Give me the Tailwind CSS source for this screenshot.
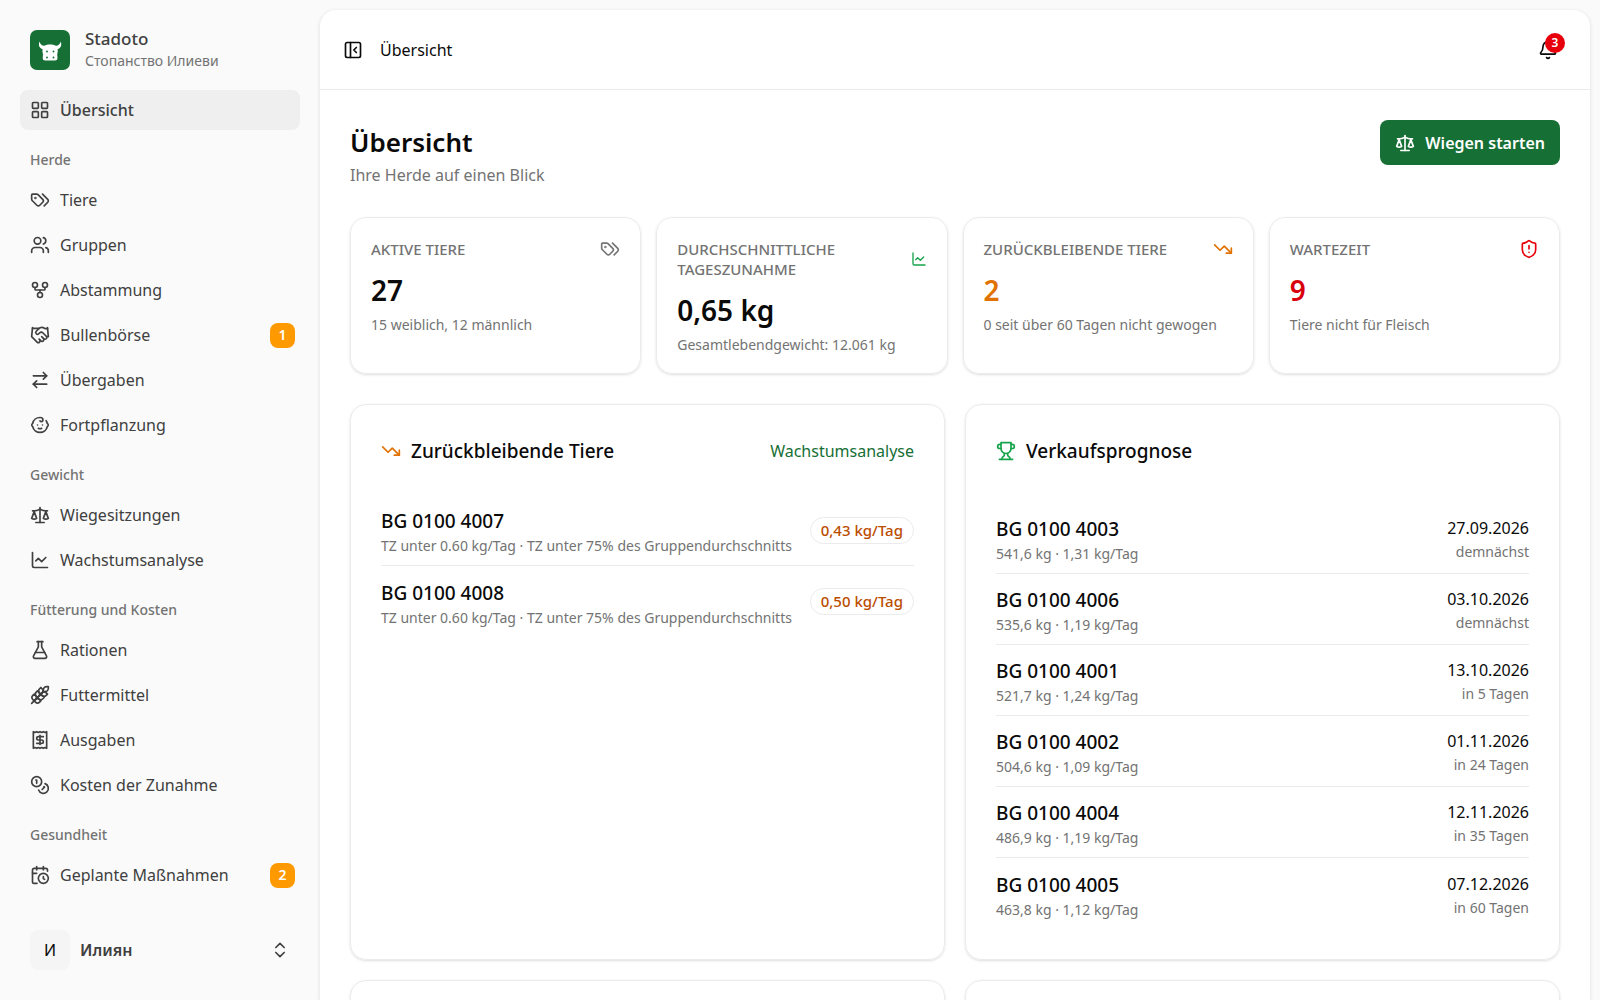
<!DOCTYPE html>
<html lang="de">
<head>
<meta charset="utf-8">
<meta name="viewport" content="width=device-width, initial-scale=1">
<title>Übersicht – Stadoto</title>
<script src="https://cdn.jsdelivr.net/npm/@tailwindcss/browser@4"></script>
</head>
<body class="bg-[#fafafa] font-['Noto_Sans',sans-serif] text-base leading-6 text-neutral-950">

<!-- Icon sprite -->
<svg class="hidden" aria-hidden="true">
  <symbol id="grid" viewBox="0 0 24 24"><rect width="7" height="7" x="3" y="3" rx="1"/><rect width="7" height="7" x="14" y="3" rx="1"/><rect width="7" height="7" x="14" y="14" rx="1"/><rect width="7" height="7" x="3" y="14" rx="1"/></symbol>
  <symbol id="tags" viewBox="0 0 24 24"><path d="m15 5 6.3 6.3a2.4 2.4 0 0 1 0 3.4L17 19"/><path d="M9.586 5.586A2 2 0 0 0 8.172 5H3a1 1 0 0 0-1 1v5.172a2 2 0 0 0 .586 1.414L8.29 18.29a2.426 2.426 0 0 0 3.42 0l3.58-3.58a2.426 2.426 0 0 0 0-3.42z"/><circle cx="6.5" cy="9.5" r=".5" fill="currentColor"/></symbol>
  <symbol id="users" viewBox="0 0 24 24"><path d="M16 21v-2a4 4 0 0 0-4-4H6a4 4 0 0 0-4 4v2"/><path d="M16 3.128a4 4 0 0 1 0 7.744"/><path d="M22 21v-2a4 4 0 0 0-3-3.87"/><circle cx="9" cy="7" r="4"/></symbol>
  <symbol id="fork" viewBox="0 0 24 24"><circle cx="12" cy="18" r="3"/><circle cx="6" cy="6" r="3"/><circle cx="18" cy="6" r="3"/><path d="M18 9v2c0 .6-.4 1-1 1H7c-.6 0-1-.4-1-1V9"/><path d="M12 12v3"/></symbol>
  <symbol id="handshake" viewBox="0 0 24 24"><path d="m11 17 2 2a1 1 0 1 0 3-3"/><path d="m14 14 2.5 2.5a1 1 0 1 0 3-3l-3.88-3.88a3 3 0 0 0-4.24 0l-.88.88a1 1 0 1 1-3-3l2.81-2.81a5.79 5.79 0 0 1 7.06-.87l.47.28a2 2 0 0 0 1.42.25L21 4"/><path d="m21 3 1 11h-2"/><path d="M3 3 2 14l6.5 6.5a1 1 0 1 0 3-3"/><path d="M3 4h8"/></symbol>
  <symbol id="arrows" viewBox="0 0 24 24"><path d="m16 3 4 4-4 4"/><path d="M20 7H4"/><path d="m8 21-4-4 4-4"/><path d="M4 17h16"/></symbol>
  <symbol id="baby" viewBox="0 0 24 24"><path d="M10 16c.5.3 1.2.5 2 .5s1.5-.2 2-.5"/><path d="M15 12h.01"/><path d="M19.38 6.813A9 9 0 0 1 20.8 10.2a2 2 0 0 1 0 3.6 9 9 0 0 1-17.6 0 2 2 0 0 1 0-3.6A9 9 0 0 1 12 3c2 0 3.5 1.1 3.5 2.5s-.9 2.5-2 2.5c-.8 0-1.5-.4-1.5-1"/><path d="M9 12h.01"/></symbol>
  <symbol id="scale" viewBox="0 0 24 24"><path d="m16 16 3-8 3 8c-.87.65-1.92 1-3 1s-2.13-.35-3-1Z"/><path d="m2 16 3-8 3 8c-.87.65-1.92 1-3 1s-2.13-.35-3-1Z"/><path d="M7 21h10"/><path d="M12 3v18"/><path d="M3 7h2c2 0 5-1 7-2 2 1 5 2 7 2h2"/></symbol>
  <symbol id="chart" viewBox="0 0 24 24"><path d="M3 3v16a2 2 0 0 0 2 2h16"/><path d="m19 9-5 5-4-4-3 3"/></symbol>
  <symbol id="flask" viewBox="0 0 24 24"><path d="M14 2v6a2 2 0 0 0 .245.96l5.51 10.08A2 2 0 0 1 18 22H6a2 2 0 0 1-1.755-2.96l5.51-10.08A2 2 0 0 0 10 8V2"/><path d="M6.453 15h11.094"/><path d="M8.5 2h7"/></symbol>
  <symbol id="wheat" viewBox="0 0 24 24"><path d="M2 22 16 8"/><path d="M3.47 12.53 5 11l1.53 1.53a3.5 3.5 0 0 1 0 4.94L5 19l-1.53-1.53a3.5 3.5 0 0 1 0-4.94Z"/><path d="M7.47 8.53 9 7l1.53 1.53a3.5 3.5 0 0 1 0 4.94L9 15l-1.53-1.53a3.5 3.5 0 0 1 0-4.94Z"/><path d="M11.47 4.53 13 3l1.53 1.53a3.5 3.5 0 0 1 0 4.94L13 11l-1.53-1.53a3.5 3.5 0 0 1 0-4.94Z"/><path d="M20 2h2v2a4 4 0 0 1-4 4h-2V6a4 4 0 0 1 4-4Z"/><path d="M11.47 17.47 13 19l-1.53 1.53a3.5 3.5 0 0 1-4.94 0L5 19l1.53-1.53a3.5 3.5 0 0 1 4.94 0Z"/><path d="M15.47 13.47 17 15l-1.53 1.53a3.5 3.5 0 0 1-4.94 0L9 15l1.53-1.53a3.5 3.5 0 0 1 4.94 0Z"/><path d="M19.47 9.47 21 11l-1.53 1.53a3.5 3.5 0 0 1-4.94 0L13 11l1.53-1.53a3.5 3.5 0 0 1 4.94 0Z"/></symbol>
  <symbol id="receipt" viewBox="0 0 24 24"><path d="M4 2v20l2-1 2 1 2-1 2 1 2-1 2 1 2-1 2 1V2l-2 1-2-1-2 1-2-1-2 1-2-1-2 1Z"/><path d="M16 8h-6a2 2 0 1 0 0 4h4a2 2 0 1 1 0 4H8"/><path d="M12 17.5v-11"/></symbol>
  <symbol id="coins" viewBox="0 0 24 24"><circle cx="8" cy="8" r="6"/><path d="M18.09 10.37A6 6 0 1 1 10.34 18"/><path d="M7 6h1v4"/><path d="m16.71 13.88.7.71-2.82 2.82"/></symbol>
  <symbol id="calendar" viewBox="0 0 24 24"><path d="M16 14v2.2l1.6 1"/><path d="M16 2v4"/><path d="M21 7.5V6a2 2 0 0 0-2-2H5a2 2 0 0 0-2 2v14a2 2 0 0 0 2 2h3.5"/><path d="M3 10h5"/><path d="M8 2v4"/><circle cx="16" cy="16" r="6"/></symbol>
  <symbol id="updown" viewBox="0 0 24 24"><path d="m7 15 5 5 5-5"/><path d="m7 9 5-5 5 5"/></symbol>
  <symbol id="panel" viewBox="0 0 24 24"><rect width="18" height="18" x="3" y="3" rx="2"/><path d="M9 3v18"/><path d="m16 15-3-3 3-3"/></symbol>
  <symbol id="bell" viewBox="0 0 24 24"><path d="M10.268 21a2 2 0 0 0 3.464 0"/><path d="M3.262 15.326A1 1 0 0 0 4 17h16a1 1 0 0 0 .74-1.673C19.41 13.956 18 12.499 18 8A6 6 0 0 0 6 8c0 4.499-1.411 5.956-2.738 7.326"/></symbol>
  <symbol id="down" viewBox="0 0 24 24"><path d="M16 17h6v-6"/><path d="m22 17-8.5-8.5-5 5L2 7"/></symbol>
  <symbol id="shield" viewBox="0 0 24 24"><path d="M20 13c0 5-3.5 7.5-7.66 8.95a1 1 0 0 1-.67-.01C7.5 20.5 4 18 4 13V6a1 1 0 0 1 1-1c2 0 4.5-1.2 6.24-2.72a1.17 1.17 0 0 1 1.52 0C14.51 3.81 17 5 19 5a1 1 0 0 1 1 1z"/><path d="M12 8v4"/><path d="M12 16h.01"/></symbol>
  <symbol id="trophy" viewBox="0 0 24 24"><path d="M6 9H4.500a2.500 2.500 0 0 1 0-5H6"/><path d="M18 9h1.500a2.500 2.500 0 0 0 0-5H18"/><path d="M4 22h16"/><path d="M10 14.660V17c0 .55-.47.98-.97 1.210C7.850 18.750 7 20.240 7 22"/><path d="M14 14.660V17c0 .55.47.98.97 1.210C16.150 18.750 17 20.240 17 22"/><path d="M18 2H6v7a6 6 0 0 0 12 0V2Z"/></symbol>
</svg>

<div class="flex h-screen overflow-hidden">

  <!-- Sidebar -->
  <aside class="flex w-80 shrink-0 flex-col text-neutral-700">
    <div class="flex items-center gap-[15px] px-[30px] pt-[29px] pb-[19px]">
      <svg class="size-10 shrink-0" viewBox="0 0 40 40" aria-hidden="true">
        <rect width="40" height="40" rx="7" fill="#166f35"/>
        <path fill="#fff" d="M9.300 11.500c-1 4 0 6.500 3.300 7.800l-.2 1.900.6 3.300-.3 3.500c.2 1.800 1 2.500 2.500 2.500h9.800c1.500 0 2.300-.7 2.500-2.500l-.3-3.500.6-3.300-.2-1.900c3.300-1.300 4.300-3.800 3.300-7.800-1 2.500-2.500 4.300-5 4.200-1.500-.8-3.700-1.200-5.800-1.200s-4.300.4-5.800 1.200c-2.500.1-4-1.700-5-4.200Z"/>
        <g fill="#166f35"><circle cx="17" cy="21.500" r=".9"/><circle cx="23.500" cy="21.500" r=".9"/><circle cx="17" cy="27.500" r=".9"/><circle cx="23.500" cy="27.500" r=".9"/></g>
      </svg>
      <div class="flex flex-col gap-0.5">
        <span class="text-[17px] leading-5 font-medium">Stadoto</span>
        <span class="text-sm leading-5 text-neutral-500">Стопанство Илиеви</span>
      </div>
    </div>

    <nav class="flex min-h-0 flex-1 flex-col gap-2.5 overflow-hidden px-5">
      <a href="#" aria-current="page" class="flex h-10 shrink-0 items-center gap-2.5 rounded-lg bg-[#efefef] px-2.5 font-medium"><svg class="size-5 fill-none stroke-current stroke-2" aria-hidden="true"><use href="#grid"/></svg>Übersicht</a>

      <section>
        <h2 class="flex h-10 items-center px-2.5 text-sm font-medium text-neutral-500">Herde</h2>
        <ul class="flex flex-col gap-[5px]">
          <li><a href="#" class="flex h-10 items-center gap-2.5 px-2.5"><svg class="size-5 fill-none stroke-current stroke-2" stroke-linecap="round" stroke-linejoin="round" aria-hidden="true"><use href="#tags"/></svg>Tiere</a></li>
          <li><a href="#" class="flex h-10 items-center gap-2.5 px-2.5"><svg class="size-5 fill-none stroke-current stroke-2" stroke-linecap="round" stroke-linejoin="round" aria-hidden="true"><use href="#users"/></svg>Gruppen</a></li>
          <li><a href="#" class="flex h-10 items-center gap-2.5 px-2.5"><svg class="size-5 fill-none stroke-current stroke-2" stroke-linecap="round" stroke-linejoin="round" aria-hidden="true"><use href="#fork"/></svg>Abstammung</a></li>
          <li><a href="#" class="flex h-10 items-center gap-2.5 pr-[5px] pl-2.5"><svg class="size-5 fill-none stroke-current stroke-2" stroke-linecap="round" stroke-linejoin="round" aria-hidden="true"><use href="#handshake"/></svg><span class="flex-1">Bullenbörse</span><span class="flex size-[25px] items-center justify-center rounded-lg bg-[#ff9900] text-sm font-semibold text-white">1</span></a></li>
          <li><a href="#" class="flex h-10 items-center gap-2.5 px-2.5"><svg class="size-5 fill-none stroke-current stroke-2" stroke-linecap="round" stroke-linejoin="round" aria-hidden="true"><use href="#arrows"/></svg>Übergaben</a></li>
          <li><a href="#" class="flex h-10 items-center gap-2.5 px-2.5"><svg class="size-5 fill-none stroke-current stroke-2" stroke-linecap="round" stroke-linejoin="round" aria-hidden="true"><use href="#baby"/></svg>Fortpflanzung</a></li>
        </ul>
      </section>

      <section>
        <h2 class="flex h-10 items-center px-2.5 text-sm font-medium text-neutral-500">Gewicht</h2>
        <ul class="flex flex-col gap-[5px]">
          <li><a href="#" class="flex h-10 items-center gap-2.5 px-2.5"><svg class="size-5 fill-none stroke-current stroke-2" stroke-linecap="round" stroke-linejoin="round" aria-hidden="true"><use href="#scale"/></svg>Wiegesitzungen</a></li>
          <li><a href="#" class="flex h-10 items-center gap-2.5 px-2.5"><svg class="size-5 fill-none stroke-current stroke-2" stroke-linecap="round" stroke-linejoin="round" aria-hidden="true"><use href="#chart"/></svg>Wachstumsanalyse</a></li>
        </ul>
      </section>

      <section>
        <h2 class="flex h-10 items-center px-2.5 text-sm font-medium text-neutral-500">Fütterung und Kosten</h2>
        <ul class="flex flex-col gap-[5px]">
          <li><a href="#" class="flex h-10 items-center gap-2.5 px-2.5"><svg class="size-5 fill-none stroke-current stroke-2" stroke-linecap="round" stroke-linejoin="round" aria-hidden="true"><use href="#flask"/></svg>Rationen</a></li>
          <li><a href="#" class="flex h-10 items-center gap-2.5 px-2.5"><svg class="size-5 fill-none stroke-current stroke-2" stroke-linecap="round" stroke-linejoin="round" aria-hidden="true"><use href="#wheat"/></svg>Futtermittel</a></li>
          <li><a href="#" class="flex h-10 items-center gap-2.5 px-2.5"><svg class="size-5 fill-none stroke-current stroke-2" stroke-linecap="round" stroke-linejoin="round" aria-hidden="true"><use href="#receipt"/></svg>Ausgaben</a></li>
          <li><a href="#" class="flex h-10 items-center gap-2.5 px-2.5"><svg class="size-5 fill-none stroke-current stroke-2" stroke-linecap="round" stroke-linejoin="round" aria-hidden="true"><use href="#coins"/></svg>Kosten der Zunahme</a></li>
        </ul>
      </section>

      <section>
        <h2 class="flex h-10 items-center px-2.5 text-sm font-medium text-neutral-500">Gesundheit</h2>
        <ul class="flex flex-col gap-[5px]">
          <li><a href="#" class="flex h-10 items-center gap-2.5 pr-[5px] pl-2.5"><svg class="size-5 fill-none stroke-current stroke-2" stroke-linecap="round" stroke-linejoin="round" aria-hidden="true"><use href="#calendar"/></svg><span class="flex-1">Geplante Maßnahmen</span><span class="flex size-[25px] items-center justify-center rounded-lg bg-[#ff9900] text-sm font-semibold text-white">2</span></a></li>
        </ul>
      </section>
    </nav>

    <button type="button" class="mx-5 mt-2.5 mb-5 flex h-[60px] shrink-0 items-center gap-2.5 px-2.5 text-left">
      <span class="flex size-10 items-center justify-center rounded-lg bg-[#f5f5f5] text-neutral-950">И</span>
      <span class="flex-1 font-semibold">Илиян</span>
      <svg class="size-5 shrink-0 fill-none stroke-current stroke-2" stroke-linecap="round" stroke-linejoin="round" aria-hidden="true"><use href="#updown"/></svg>
    </button>
  </aside>

  <!-- Content -->
  <main class="mt-2.5 mr-2.5 min-w-0 flex-1 overflow-hidden rounded-t-2xl bg-white shadow-[0_1px_4px_rgba(0,0,0,0.12)]">
    <header class="flex h-20 items-center justify-between border-b border-[#ebebeb] pr-8 pl-[23px]">
      <div class="flex items-center gap-[17px]">
        <button type="button" aria-label="Seitenleiste umschalten"><svg class="size-5 fill-none stroke-current stroke-2" stroke-linecap="round" stroke-linejoin="round" aria-hidden="true"><use href="#panel"/></svg></button>
        <span>Übersicht</span>
      </div>
      <button type="button" aria-label="Benachrichtigungen" class="relative">
        <svg class="size-5 fill-none stroke-current stroke-2" stroke-linecap="round" stroke-linejoin="round" aria-hidden="true"><use href="#bell"/></svg>
        <span class="absolute -top-[7px] -right-[7px] flex size-5 items-center justify-center rounded-full bg-[#e7000b] text-xs font-semibold text-white">3</span>
      </button>
    </header>

    <div class="flex flex-col p-[30px]">
      <div class="flex items-start justify-between">
        <div>
          <h1 class="text-[26px] leading-[44px] font-semibold">Übersicht</h1>
          <p class="leading-[22px] text-neutral-500">Ihre Herde auf einen Blick</p>
        </div>
        <button type="button" class="flex h-[45px] items-center gap-2.5 rounded-lg bg-[#166f35] px-[15px] font-semibold text-white"><svg class="size-5 fill-none stroke-current stroke-2" stroke-linecap="round" stroke-linejoin="round" aria-hidden="true"><use href="#scale"/></svg>Wiegen starten</button>
      </div>

      <div class="mt-[31px] grid grid-cols-4 gap-[15px]">
        <section class="rounded-2xl border border-[#ebebeb] px-5 pt-[21px] pb-[18px] shadow-sm">
          <div class="flex items-center justify-between gap-5"><h2 class="text-[15px] leading-5 font-medium text-neutral-500 uppercase">Aktive Tiere</h2><svg class="size-5 shrink-0 fill-none stroke-neutral-500 stroke-2 text-neutral-500" stroke-linecap="round" stroke-linejoin="round" aria-hidden="true"><use href="#tags"/></svg></div>
          <p class="mt-[11px] text-[28px] leading-10 font-semibold">27</p>
          <p class="mt-[5px] text-sm leading-5 text-neutral-500">15 weiblich, 12 männlich</p>
        </section>
        <section class="rounded-2xl border border-[#ebebeb] px-5 pt-[21px] pb-[18px] shadow-sm">
          <div class="flex items-center justify-between gap-5"><h2 class="text-[15px] leading-5 font-medium text-neutral-500 uppercase">Durchschnittliche<br>Tageszunahme</h2><svg class="size-4 shrink-0 fill-none stroke-[#16a34a] stroke-2" stroke-linecap="round" stroke-linejoin="round" aria-hidden="true"><use href="#chart"/></svg></div>
          <p class="mt-[11px] text-[28px] leading-10 font-semibold">0,65 kg</p>
          <p class="mt-[5px] text-sm leading-5 text-neutral-500">Gesamtlebendgewicht: 12.061 kg</p>
        </section>
        <section class="rounded-2xl border border-[#ebebeb] px-5 pt-[21px] pb-[18px] shadow-sm">
          <div class="flex items-center justify-between gap-5"><h2 class="text-[15px] leading-5 font-medium text-neutral-500 uppercase">Zurückbleibende Tiere</h2><svg class="size-5 shrink-0 fill-none stroke-[#e17100] stroke-2" stroke-linecap="round" stroke-linejoin="round" aria-hidden="true"><use href="#down"/></svg></div>
          <p class="mt-[11px] text-[28px] leading-10 font-semibold text-[#e17100]">2</p>
          <p class="mt-[5px] text-sm leading-5 text-neutral-500">0 seit über 60 Tagen nicht gewogen</p>
        </section>
        <section class="rounded-2xl border border-[#ebebeb] px-5 pt-[21px] pb-[18px] shadow-sm">
          <div class="flex items-center justify-between gap-5"><h2 class="text-[15px] leading-5 font-medium text-neutral-500 uppercase">Wartezeit</h2><svg class="size-5 shrink-0 fill-none stroke-[#e7000b] stroke-2" stroke-linecap="round" stroke-linejoin="round" aria-hidden="true"><use href="#shield"/></svg></div>
          <p class="mt-[11px] text-[28px] leading-10 font-semibold text-[#d9000d]">9</p>
          <p class="mt-[5px] text-sm leading-5 text-neutral-500">Tiere nicht für Fleisch</p>
        </section>
      </div>

      <div class="mt-[30px] grid grid-cols-2 gap-5">
        <section class="rounded-2xl border border-[#ebebeb] px-[30px] pt-[31px] shadow-sm">
          <div class="flex h-[30px] items-center justify-between">
            <h2 class="flex items-center gap-2.5 text-[19px] font-medium"><svg class="size-5 fill-none stroke-[#e17100] stroke-2" stroke-linecap="round" stroke-linejoin="round" aria-hidden="true"><use href="#down"/></svg>Zurückbleibende Tiere</h2>
            <a href="#" class="text-[#166f35]">Wachstumsanalyse</a>
          </div>
          <ul class="mt-[29px] divide-y divide-[#ebebeb]">
            <li class="flex h-[71px] items-center justify-between">
              <div class="pt-1.5"><p class="text-[19px] leading-[26px] font-medium">BG 0100 4007</p><p class="text-sm leading-6 text-neutral-500">TZ unter 0.60 kg/Tag · TZ unter 75% des Gruppendurchschnitts</p></div>
              <span class="rounded-full border border-[#ebebeb] px-2.5 py-0.5 text-[15px] leading-[21px] font-medium text-[#bb4d00]">0,43 kg/Tag</span>
            </li>
            <li class="flex h-[71px] items-center justify-between">
              <div class="pt-1.5"><p class="text-[19px] leading-[26px] font-medium">BG 0100 4008</p><p class="text-sm leading-6 text-neutral-500">TZ unter 0.60 kg/Tag · TZ unter 75% des Gruppendurchschnitts</p></div>
              <span class="rounded-full border border-[#ebebeb] px-2.5 py-0.5 text-[15px] leading-[21px] font-medium text-[#bb4d00]">0,50 kg/Tag</span>
            </li>
          </ul>
        </section>

        <section class="rounded-2xl border border-[#ebebeb] px-[30px] pt-[31px] pb-[30px] shadow-sm">
          <h2 class="flex h-[30px] items-center gap-2.5 text-[19px] font-medium"><svg class="size-5 fill-none stroke-[#16a34a] stroke-2" stroke-linecap="round" stroke-linejoin="round" aria-hidden="true"><use href="#trophy"/></svg>Verkaufsprognose</h2>
          <ul id="forecast" class="mt-[37px] divide-y divide-[#ebebeb]"></ul>
        </section>

        <section class="h-60 rounded-2xl border border-[#ebebeb] shadow-sm"></section>
        <section class="h-60 rounded-2xl border border-[#ebebeb] shadow-sm"></section>
      </div>
    </div>
  </main>
</div>

<script>
  const forecast = [
    ['BG 0100 4003', '541,6 kg · 1,31 kg/Tag', '27.09.2026', 'demnächst'],
    ['BG 0100 4006', '535,6 kg · 1,19 kg/Tag', '03.10.2026', 'demnächst'],
    ['BG 0100 4001', '521,7 kg · 1,24 kg/Tag', '13.10.2026', 'in 5 Tagen'],
    ['BG 0100 4002', '504,6 kg · 1,09 kg/Tag', '01.11.2026', 'in 24 Tagen'],
    ['BG 0100 4004', '486,9 kg · 1,19 kg/Tag', '12.11.2026', 'in 35 Tagen'],
    ['BG 0100 4005', '463,8 kg · 1,12 kg/Tag', '07.12.2026', 'in 60 Tagen'],
  ];
  document.getElementById('forecast').innerHTML = forecast.map(([tag, weight, date, due]) => `
    <li class="flex h-[71px] items-center justify-between">
      <div class="pt-1.5"><p class="text-[19px] leading-[26px] font-medium">${tag}</p><p class="text-sm leading-6 text-neutral-500">${weight}</p></div>
      <div class="pt-1 text-right"><p class="leading-6">${date}</p><p class="text-sm leading-6 text-neutral-500">${due}</p></div>
    </li>`).join('');
</script>
</body>
</html>
